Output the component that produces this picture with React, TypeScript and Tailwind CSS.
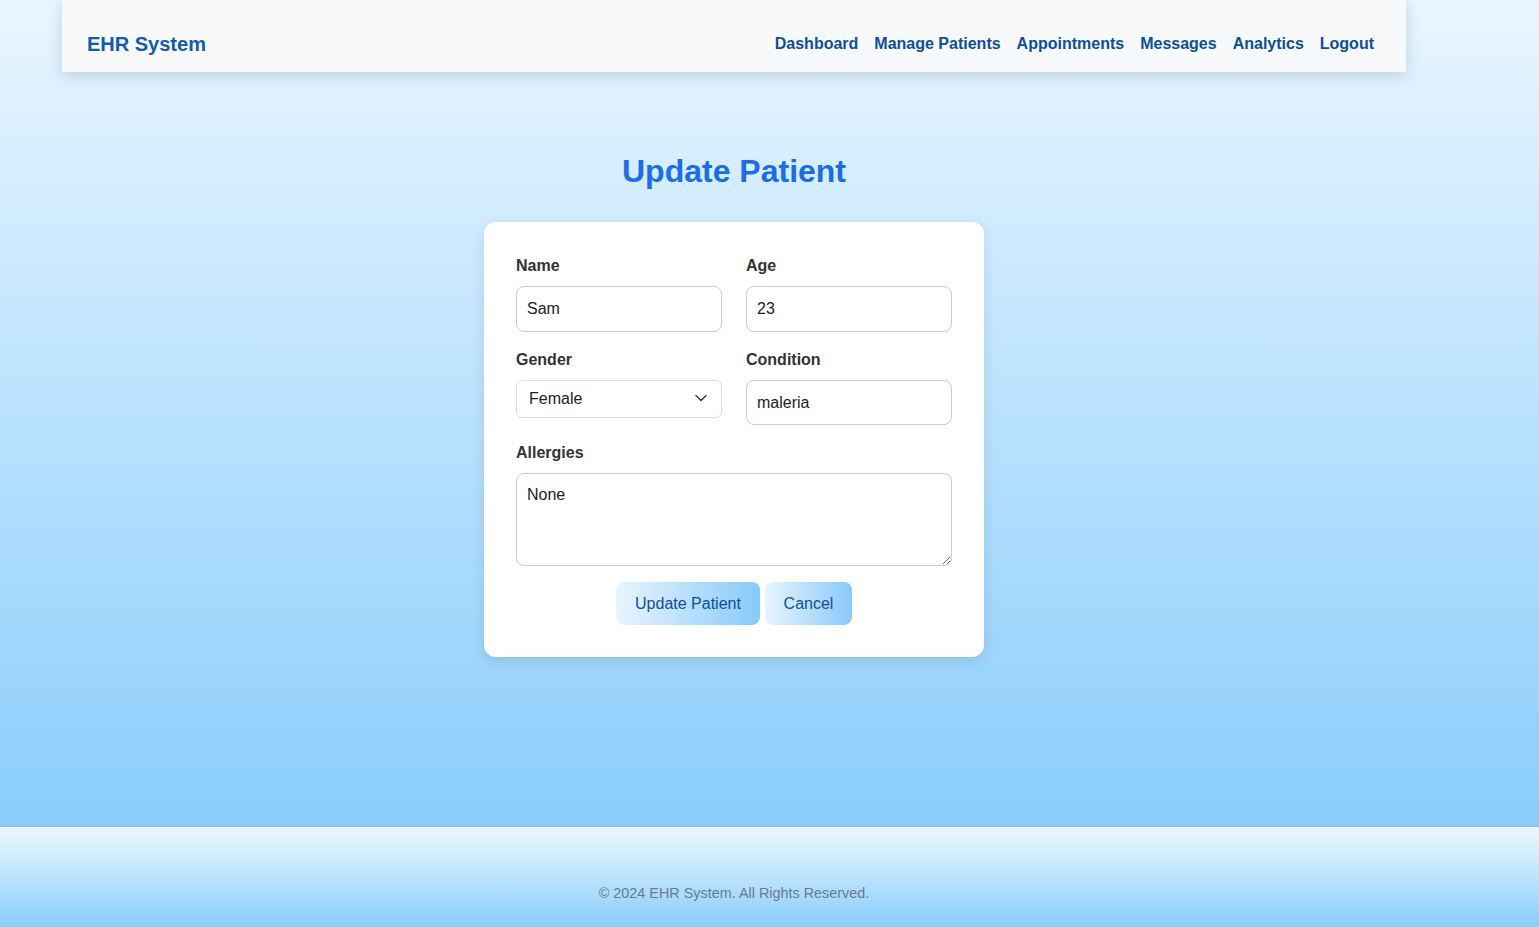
import { ChevronDown } from "lucide-react";

const links = ["Dashboard", "Manage Patients", "Appointments", "Messages", "Analytics", "Logout"];

function Label({ children }: { children: string }) {
  return (
    <label className="block h-[20px] leading-[20px] mb-[10px] text-base font-bold text-[#333]">
      {children}
    </label>
  );
}

const fieldCls =
  "block w-full px-[10px] rounded-lg border border-[#ccc] bg-white text-base text-[#222] outline-none";

export default function App() {
  return (
    <div className="min-h-[927px] flex flex-col font-['Liberation_Sans',Arial,sans-serif]">
      <main className="h-[827px] bg-gradient-to-b from-[#e9f6ff] to-[#89cdfb] border-b border-[#84c2ee]">
        <div className="w-[1468px]">
          <nav className="mx-[62px] h-[72px] bg-[#f8f9fa] shadow-[0_4px_14px_rgba(60,90,120,0.22)] flex items-start justify-between pl-[25px] pr-8 pt-[33px]">
            <span className="text-xl leading-[23px] font-bold text-[#0f5bb5]">EHR System</span>
            <ul className="flex gap-4 pt-[2px]">
              {links.map((l) => (
                <li key={l} className="text-base leading-[18px] font-bold text-[#0c4f9f]">
                  {l}
                </li>
              ))}
            </ul>
          </nav>

          <h1 className="mt-[81px] text-center text-[32px] leading-[37px] font-bold text-[#1a6cf0]">
            Update Patient
          </h1>

          <div className="mt-[32px] mx-auto w-[500px] bg-white rounded-xl shadow-[0_4px_14px_rgba(0,0,0,0.1)] px-8 pt-[34px] pb-8">
            <div className="grid grid-cols-2 gap-x-6 gap-y-[18px] items-start">
              <div>
                <Label>Name</Label>
                <input className={fieldCls + " h-[46px]"} defaultValue="Sam" />
              </div>
              <div>
                <Label>Age</Label>
                <input className={fieldCls + " h-[46px]"} defaultValue="23" />
              </div>
              <div>
                <Label>Gender</Label>
                <div className="relative">
                  <select
                    defaultValue="Female"
                    className="block w-full h-[38px] pl-3 pr-8 appearance-none rounded-md border border-[#dcdcdc] bg-white text-base text-[#222] outline-none"
                  >
                    <option>Male</option>
                    <option>Female</option>
                    <option>Other</option>
                  </select>
                  <ChevronDown
                    className="absolute right-[11px] top-[8px] w-[20px] h-[20px] text-[#333] pointer-events-none"
                    strokeWidth={1.6}
                  />
                </div>
              </div>
              <div>
                <Label>Condition</Label>
                <input className={fieldCls + " h-[45px]"} defaultValue="maleria" />
              </div>
              <div className="col-span-2">
                <Label>Allergies</Label>
                <textarea
                  className={fieldCls + " h-[93px] pt-[9px] pb-[10px]"}
                  defaultValue="None"
                />
              </div>
            </div>
            <div className="mt-4 flex justify-center gap-[5px]">
              <button className="h-[43px] w-[144px] rounded-lg bg-gradient-to-r from-[#e8f5ff] to-[#87c9f8] text-base text-[#0d4f9e]">
                Update Patient
              </button>
              <button className="h-[43px] w-[87px] rounded-lg bg-gradient-to-r from-[#e8f5ff] to-[#87c9f8] text-base text-[#0d4f9e]">
                Cancel
              </button>
            </div>
          </div>
        </div>
      </main>
      <footer className="h-[100px] bg-gradient-to-b from-[#eef8ff] to-[#88cdfb]">
        <div className="w-[1468px] pt-[58px] text-center text-[14.4px] leading-4 text-[#6b7a88]">
          © 2024 EHR System. All Rights Reserved.
        </div>
      </footer>
    </div>
  );
}
